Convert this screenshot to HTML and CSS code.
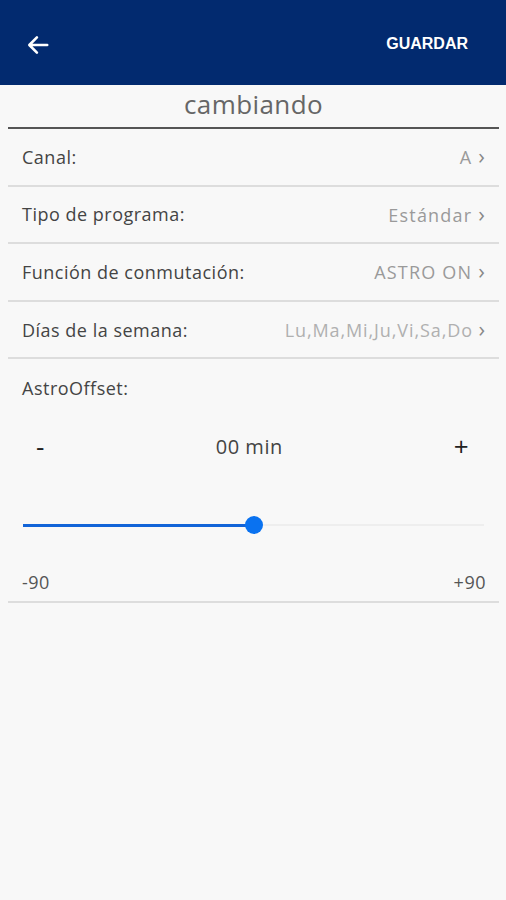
FILE: index.html
```html
<!DOCTYPE html>
<html lang="es">
<head>
    <meta charset="UTF-8">
    <title>Programa</title>
<link rel="stylesheet" href="styles.css">
</head>
<body>
    <div id="top-bar">
        <button class="back-btn" aria-label="Volver">
            <svg width="26" height="26" viewBox="0 0 24 24"><path d="M20.5 12H4.5M11 5l-7 7 7 7" fill="none" stroke="#fff" stroke-width="2.4" stroke-linecap="round" stroke-linejoin="round"/></svg>
        </button>
        <button class="save-btn">GUARDAR</button>
    </div>

    <div id="program">
        <div class="program-name">cambiando</div>

        <div class="row">
            <span class="label">Canal:</span>
            <span class="value">A <span class="chev">&#x203A;</span></span>
        </div>
        <div class="row">
            <span class="label">Tipo de programa:</span>
            <span class="value">Estándar <span class="chev">&#x203A;</span></span>
        </div>
        <div class="row">
            <span class="label">Función de conmutación:</span>
            <span class="value">ASTRO ON <span class="chev">&#x203A;</span></span>
        </div>
        <div class="row">
            <span class="label">Días de la semana:</span>
            <span class="value days">Lu,Ma,Mi,Ju,Vi,Sa,Do <span class="chev">&#x203A;</span></span>
        </div>

        <div class="offset">
            <div class="label">AstroOffset:</div>
            <div class="stepper">
                <span class="step">-</span>
                <span class="minutes">00 min</span>
                <span class="step">+</span>
            </div>
            <div class="slider">
                <div class="track-fill" style="width: 50%;"></div>
                <div class="thumb"></div>
                <div class="track-rest"></div>
            </div>
            <div class="range">
                <span>-90</span>
                <span>+90</span>
            </div>
        </div>
    </div>
</body>
</html>
```

FILE: styles.css
```css
body {
    margin: 0;
    font-family: "Open Sans", Arial, sans-serif;
    background-color: #f8f8f8;
    color: #444;
}

#top-bar {
    height: 85px;
    background-color: #022a6f;
    display: flex;
    align-items: center;
    justify-content: space-between;
    padding: 0 38px 0 25px;
}

#top-bar button {
    background: none;
    border: none;
    color: white;
    cursor: pointer;
    padding: 0;
}

.back-btn {
    display: flex;
    margin-top: 4px;
}

.save-btn {
    font-family: "Liberation Sans", Arial, sans-serif;
    font-size: 16px;
    font-weight: bold;
    margin-top: 2px;
}

#program {
    padding: 0 7px 0 8px;
}

.program-name {
    text-align: center;
    font-size: 26px;
    letter-spacing: 0.4px;
    color: #666;
    height: 42px;
    line-height: 38px;
    border-bottom: 2px solid #555;
}

.row {
    display: flex;
    justify-content: space-between;
    align-items: center;
    height: 55.6px;
    padding: 0 13px 0 14px;
    border-bottom: 2px solid #ddd;
    font-size: 18px;
    letter-spacing: 0.5px;
}

.value {
    color: #9a9a9a;
    letter-spacing: 1.2px;
}

.days {
    color: #b0b0b0;
    letter-spacing: 0.9px;
}

.chev {
    font-size: 22px;
    line-height: 1;
    color: #888;
}

.offset {
    border-bottom: 2px solid #ddd;
    padding: 17px 13px 7px 14px;
    letter-spacing: 0.5px;
}

.offset .label {
    font-size: 18px;
}

.stepper {
    display: flex;
    justify-content: space-between;
    align-items: center;
    height: 28px;
    margin-top: 32px;
    padding: 0 17px 0 14px;
    font-size: 20px;
}

.step {
    font-size: 26px;
    color: #222;
}

.minutes {
    color: #444;
}

.slider {
    display: flex;
    align-items: center;
    margin: 56px 2px 0 1px;
    height: 18px;
}

.track-fill {
    height: 3px;
    background-color: #1264d8;
}

.thumb {
    width: 18px;
    height: 18px;
    border-radius: 50%;
    background-color: #0a72f0;
    flex-shrink: 0;
    margin-left: -9px;
}

.track-rest {
    flex: 1;
    height: 2px;
    background-color: #eee;
}

.range {
    display: flex;
    justify-content: space-between;
    margin-top: 36px;
    font-size: 18px;
    color: #555;
}
```
